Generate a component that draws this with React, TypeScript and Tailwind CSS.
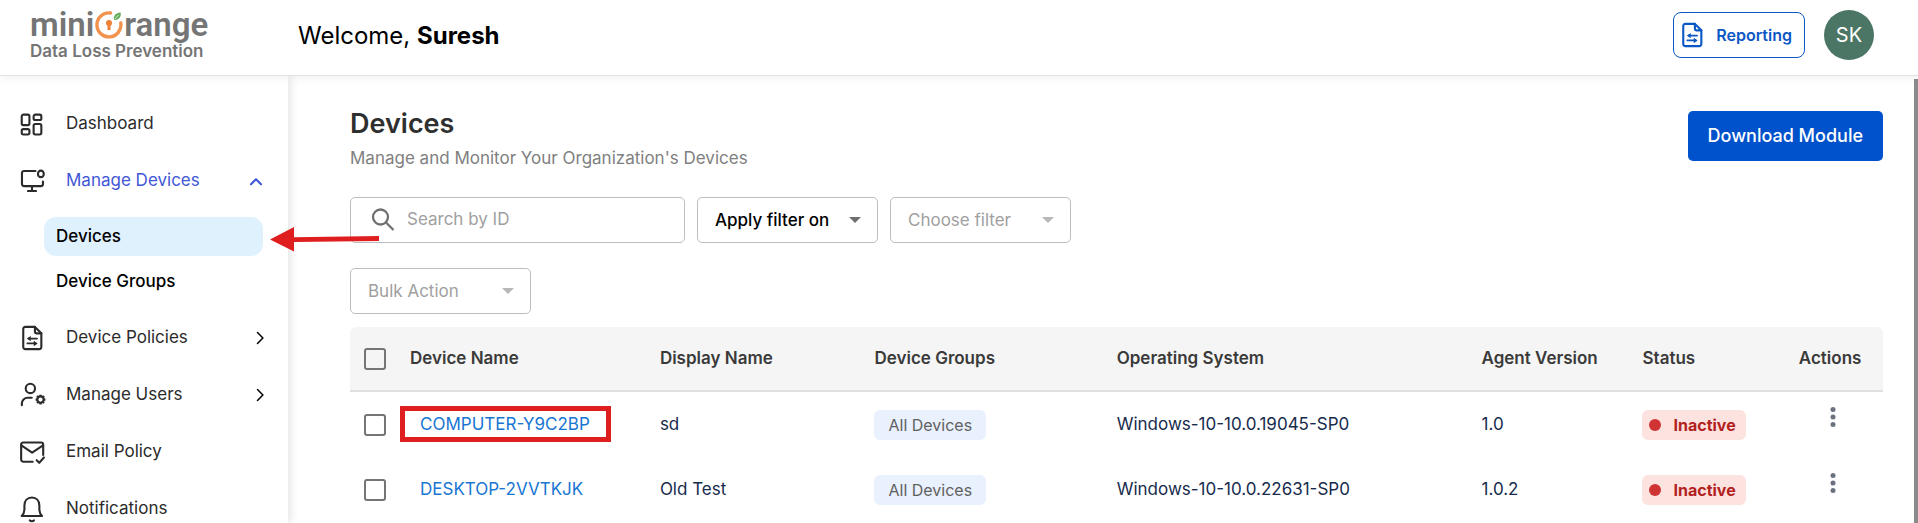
import { ReactNode } from 'react';

type IconProps = { className?: string };

function Icon({ className = 'size-7', children }: { className?: string; children: ReactNode }) {
  return (
    <svg
      viewBox="0 0 24 24"
      className={`shrink-0 ${className}`}
      fill="none"
      stroke="currentColor"
      strokeWidth="1.8"
      strokeLinecap="round"
      strokeLinejoin="round"
      aria-hidden="true"
    >
      {children}
    </svg>
  );
}

const DashboardIcon = () => (
  <Icon>
    <rect x="3.2" y="4" width="6.6" height="9" rx="1.4" />
    <rect x="13.4" y="4" width="6.6" height="4.6" rx="1.4" />
    <rect x="13.4" y="12" width="6.6" height="9" rx="1.4" />
    <rect x="3.2" y="16.4" width="6.6" height="4.6" rx="1.4" />
  </Icon>
);

const MonitorIcon = () => (
  <Icon>
    <path d="M15 3.4H5.2A1.8 1.8 0 0 0 3.4 5.2V14.600a1.800 1.800 0 0 0 1.800 1.800H19.600a1.800 1.800 0 0 0 1.800-1.800V12.500" />
    <path d="M12 16.400v3.800M8.500 20.600h7" />
    <ellipse cx="19.600" cy="5.900" rx="2.500" ry="2.800" />
  </Icon>
);

const PolicyIcon = ({ className }: IconProps) => (
  <Icon className={className}>
    <path d="M14.500 2.500H6.200a1.700 1.700 0 0 0-1.700 1.700v15.600a1.700 1.700 0 0 0 1.700 1.700h12.100a1.700 1.700 0 0 0 1.700-1.700V8z" />
    <path d="M14.500 2.500V6.800A1.200 1.200 0 0 0 15.700 8H20" />
    <path d="M9 12.500h7.300M8 16.700h7.300" strokeWidth="1.500" />
    <path d="M10.900 10.200L7.600 12.500l3.300 2.300zM13.500 14.400l3.300 2.300-3.300 2.300z" fill="currentColor" stroke="none" />
  </Icon>
);

const UserGearIcon = () => (
  <Icon>
    <circle cx="10.600" cy="6.400" r="4" />
    <path d="M3.300 20.800v-1.500a5 5 0 0 1 5-5h3.500" />
    <circle cx="19.300" cy="15.900" r="2.700" />
    <path
      d="M19.300 11.700v1.200M19.300 18.900v1.200M15.100 15.900h1.200M22.300 15.900h1.200M16.300 12.900l.9.9M21.400 18l.9.9M22.300 12.900l-.9.900M17.200 18l-.9.900"
      strokeWidth="2"
      strokeLinecap="butt"
    />
  </Icon>
);

const MailCheckIcon = () => (
  <Icon>
    <path d="M12.600 20.300H4.500a1.800 1.800 0 0 1-1.800-1.800V5.600a1.800 1.800 0 0 1 1.800-1.800h15.300a1.800 1.800 0 0 1 1.800 1.800V14.500" />
    <path d="M3.200 6.500l8.900 6 9-6M16 19l2.200 2.300 4-4.600" />
  </Icon>
);

const BellIcon = () => (
  <Icon>
    <path d="M3.200 18h17.400c-1.500-1.500-2.200-3-2.300-5.300V9c0-4-2.600-6.800-6.400-6.800S5.500 5 5.500 9v3.700c-.1 2.300-.8 3.800-2.300 5.300z" />
    <path d="M10.100 21.700c.8 1 2.800 1 3.600 0" />
  </Icon>
);

function Logo() {
  return (
    <a href="#" className="flex flex-col text-[#757575]">
      <span className="flex items-center font-[Roboto] text-[33px] leading-8 font-semibold">
        mini
        <svg viewBox="0 0 28 30" className="mx-px h-[30px] w-7 shrink-0" fill="none" aria-hidden="true">
          <path d="M15.500 3A12 12 0 1 0 25.800 13" stroke="#f2924f" strokeWidth="3.400" strokeLinecap="round" />
          <circle cx="14" cy="13" r="3" fill="#ee7f35" />
          <path d="M12.700 13h2.600l.3 7h-3.200z" fill="#ee7f35" />
          <path d="M19 10c-.8-4 1.500-7.500 6.600-7.600C26.500 6.500 24 10 19 10z" fill="#5fae57" />
          <path d="M19.600 9.400l4-4.600" stroke="#fff" strokeWidth=".8" />
        </svg>
        range
      </span>
      <span className="text-[17px] leading-5 font-semibold">Data Loss Prevention</span>
    </a>
  );
}

const Caret = ({ className = '' }: IconProps) => (
  <svg viewBox="0 0 12 6" className={`pointer-events-none absolute top-1/2 right-[17px] h-1.5 w-3 -translate-y-1/2 ${className}`} aria-hidden="true">
    <path d="M0 0h12L6 6z" fill="currentColor" />
  </svg>
);

function FilterSelect({ label, active = false }: { label: string; active?: boolean }) {
  return (
    <div className="relative w-[181px]">
      <select
        aria-label={label}
        disabled={!active}
        className={`block h-[46px] w-full appearance-none rounded-[5px] border border-[#bdbdbd] pt-0.5 pl-[17px] text-[17px] opacity-100 ${
          active ? 'font-medium text-black' : 'text-[#a0a0a0]'
        }`}
      >
        <option>{label}</option>
      </select>
      <Caret className={active ? 'text-[#707070]' : 'text-[#b8b8b8]'} />
    </div>
  );
}

function NavItem({ icon, label, chevron = false }: { icon: ReactNode; label: string; chevron?: boolean }) {
  return (
    <a href="#" className="flex h-[57px] items-center pr-[18px] pl-[18px]">
      {icon}
      <span className="ml-5 flex-1">{label}</span>
      {chevron && (
        <Icon className="size-5 text-black">
          <path d="M9 5.500l6.500 6.500L9 18.500" />
        </Icon>
      )}
    </a>
  );
}

function Sidebar() {
  return (
    <nav className="w-72 shrink-0 overflow-hidden pt-[19px] text-[17px] text-[#2b2b2b] shadow-[3px_0_8px_rgba(0,0,0,0.1)]">
      <NavItem icon={<DashboardIcon />} label="Dashboard" />
      <button type="button" className="flex h-[57px] w-full items-center pr-[22px] pl-[18px] text-left">
        <MonitorIcon />
        <span className="ml-5 flex-1 text-[#3f57d6]">Manage Devices</span>
        <Icon className="size-5 text-[#3f57d6]">
          <path d="M6 16l6-6 6 6" strokeWidth="2.500" />
        </Icon>
      </button>
      <div className="mt-2 mr-[25px] mb-1.5 ml-11 font-medium text-black">
        <a href="#" className="flex h-[39px] items-center rounded-xl bg-[#e0f1fe] px-3">
          Devices
        </a>
        <a href="#" className="mt-[5px] flex h-[42px] items-center px-3">
          Device Groups
        </a>
      </div>
      <NavItem icon={<PolicyIcon />} label="Device Policies" chevron />
      <NavItem icon={<UserGearIcon />} label="Manage Users" chevron />
      <NavItem icon={<MailCheckIcon />} label="Email Policy" />
      <NavItem icon={<BellIcon />} label="Notifications" />
    </nav>
  );
}

const devices = [
  { name: 'COMPUTER-Y9C2BP', display: 'sd', os: 'Windows-10-10.0.19045-SP0', version: '1.0', marked: true },
  { name: 'DESKTOP-2VVTKJK', display: 'Old Test', os: 'Windows-10-10.0.22631-SP0', version: '1.0.2', marked: false },
];

const Checkbox = ({ label }: { label: string }) => (
  <input
    type="checkbox"
    aria-label={label}
    className="block size-[22px] appearance-none rounded-[3px] border-2 border-[#757575] checked:bg-[#0052cc]"
  />
);

function DeviceTable() {
  return (
    <table className="mt-[13px] w-full table-fixed text-left text-[17px]">
      <colgroup>
        <col className="w-11" />
        <col className="w-[16.3%]" />
        <col className="w-[14%]" />
        <col className="w-[15.8%]" />
        <col className="w-[23.8%]" />
        <col className="w-[10.5%]" />
        <col className="w-[10.2%]" />
        <col />
      </colgroup>
      <thead>
        <tr className="h-16 border-b-2 border-[#e0e0e0] bg-[#f5f5f5] text-[#3a3a3a] [&>th]:px-4 [&>th]:font-semibold">
          <th className="rounded-tl-md !px-3.5">
            <Checkbox label="Select all devices" />
          </th>
          <th>Device Name</th>
          <th>Display Name</th>
          <th>Device Groups</th>
          <th>Operating System</th>
          <th>Agent Version</th>
          <th>Status</th>
          <th className="rounded-tr-md">Actions</th>
        </tr>
      </thead>
      <tbody>
        {devices.map((d) => (
          <tr key={d.name} className="h-[66px] text-[#172b4d] [&>td]:px-4">
            <td className="!px-3.5">
              <Checkbox label={`Select ${d.name}`} />
            </td>
            <td className="relative">
              <a href="#" className="pl-2.5 text-[#1976d2]">
                {d.name}
              </a>
              {d.marked && (
                <span className="pointer-events-none absolute top-[14px] left-1.5 h-9 w-[211px] border-[5px] border-[#df1f1f]" />
              )}
            </td>
            <td>{d.display}</td>
            <td>
              <span className="inline-flex h-[30px] items-center rounded-md bg-[#e9f0fe] px-3.5 align-middle text-base text-[#616161]">
                All Devices
              </span>
            </td>
            <td>{d.os}</td>
            <td>{d.version}</td>
            <td>
              <span className="inline-flex h-[30px] items-center gap-3 rounded-md bg-[#fde3df] pr-2.5 pl-[7px] align-middle text-base font-bold text-[#b3211f]">
                <span className="size-3 rounded-full bg-[#cf3333]" />
                Inactive
              </span>
            </td>
            <td className="pb-4 text-center">
              <button type="button" aria-label={`Actions for ${d.name}`} className="align-middle text-[#6b7280]">
                <svg viewBox="0 0 6 20" className="h-5 w-1.5" fill="currentColor">
                  <circle cx="3" cy="2.500" r="2.500" />
                  <circle cx="3" cy="10" r="2.500" />
                  <circle cx="3" cy="17.500" r="2.500" />
                </svg>
              </button>
            </td>
          </tr>
        ))}
      </tbody>
    </table>
  );
}

export default function App() {
  return (
    <div className="relative flex h-screen flex-col overflow-hidden bg-white font-[Inter,'Liberation_Sans',sans-serif]">
      <header className="z-10 flex h-[76px] shrink-0 items-center border-b border-[#e2e2e2] bg-white pr-11 pb-1.5 pl-[30px] shadow-[0_3px_8px_rgba(0,0,0,0.05)]">
        <div className="w-[268px]">
          <Logo />
        </div>
        <h1 className="flex-1 pt-0.5 text-2xl text-black">
          Welcome, <b>Suresh</b>
        </h1>
        <button
          type="button"
          className="flex h-[46px] items-center gap-2.5 rounded-lg border border-[#0b57c4] pr-3 pl-1 text-base font-semibold text-[#0b57c4]"
        >
          <PolicyIcon />
          Reporting
        </button>
        <button type="button" className="ml-[19px] size-[50px] rounded-full bg-[#4b7564] text-xl text-white">
          SK
        </button>
      </header>

      <div className="flex min-h-0 flex-1">
        <Sidebar />
        <main className="min-w-0 flex-1 overflow-hidden pt-8 pr-[31px] pl-[62px]">
          <div className="flex items-start justify-between">
            <div>
              <h2 className="text-[27px] leading-8 font-semibold text-[#2f2f2f]">Devices</h2>
              <p className="mt-1.5 text-[17px] leading-6 text-[#808080]">Manage and Monitor Your Organization's Devices</p>
            </div>
            <button type="button" className="mt-[3px] h-[50px] rounded-[5px] bg-[#0052cc] px-5 text-lg font-medium text-white">
              Download Module
            </button>
          </div>

          <div className="mt-[27px] flex gap-3">
            <label className="flex h-[46px] w-[335px] items-center gap-3 rounded-[5px] border border-[#bdbdbd] px-5">
              <svg viewBox="0 0 24 24" className="size-6 shrink-0 text-[#707070]" fill="none" stroke="currentColor" strokeWidth="2.300" aria-hidden="true">
                <circle cx="9.500" cy="9" r="7.500" />
                <path d="M15 14.500l7.500 7.500" />
              </svg>
              <input
                type="text"
                aria-label="Search by ID"
                placeholder="Search by ID"
                className="w-full min-w-0 text-[17px] outline-none placeholder:text-[#a0a0a0]"
              />
            </label>
            <FilterSelect label="Apply filter on" active />
            <FilterSelect label="Choose filter" />
          </div>
          <div className="mt-[25px]">
            <FilterSelect label="Bulk Action" />
          </div>
          <DeviceTable />
        </main>
        <div className="mt-[3px] w-1 shrink-0 bg-[#8b8b8b]" />
      </div>

      {/* callout arrow pointing at the active menu entry */}
      <svg viewBox="0 0 110 26" className="pointer-events-none absolute top-[226px] left-[269px] z-20 h-[26px] w-[110px]" fill="#df1f1f" aria-hidden="true">
        <path d="M1 13.500L25 1v10.300l85-1.300v5L25 16v9.500z" />
      </svg>
    </div>
  );
}
